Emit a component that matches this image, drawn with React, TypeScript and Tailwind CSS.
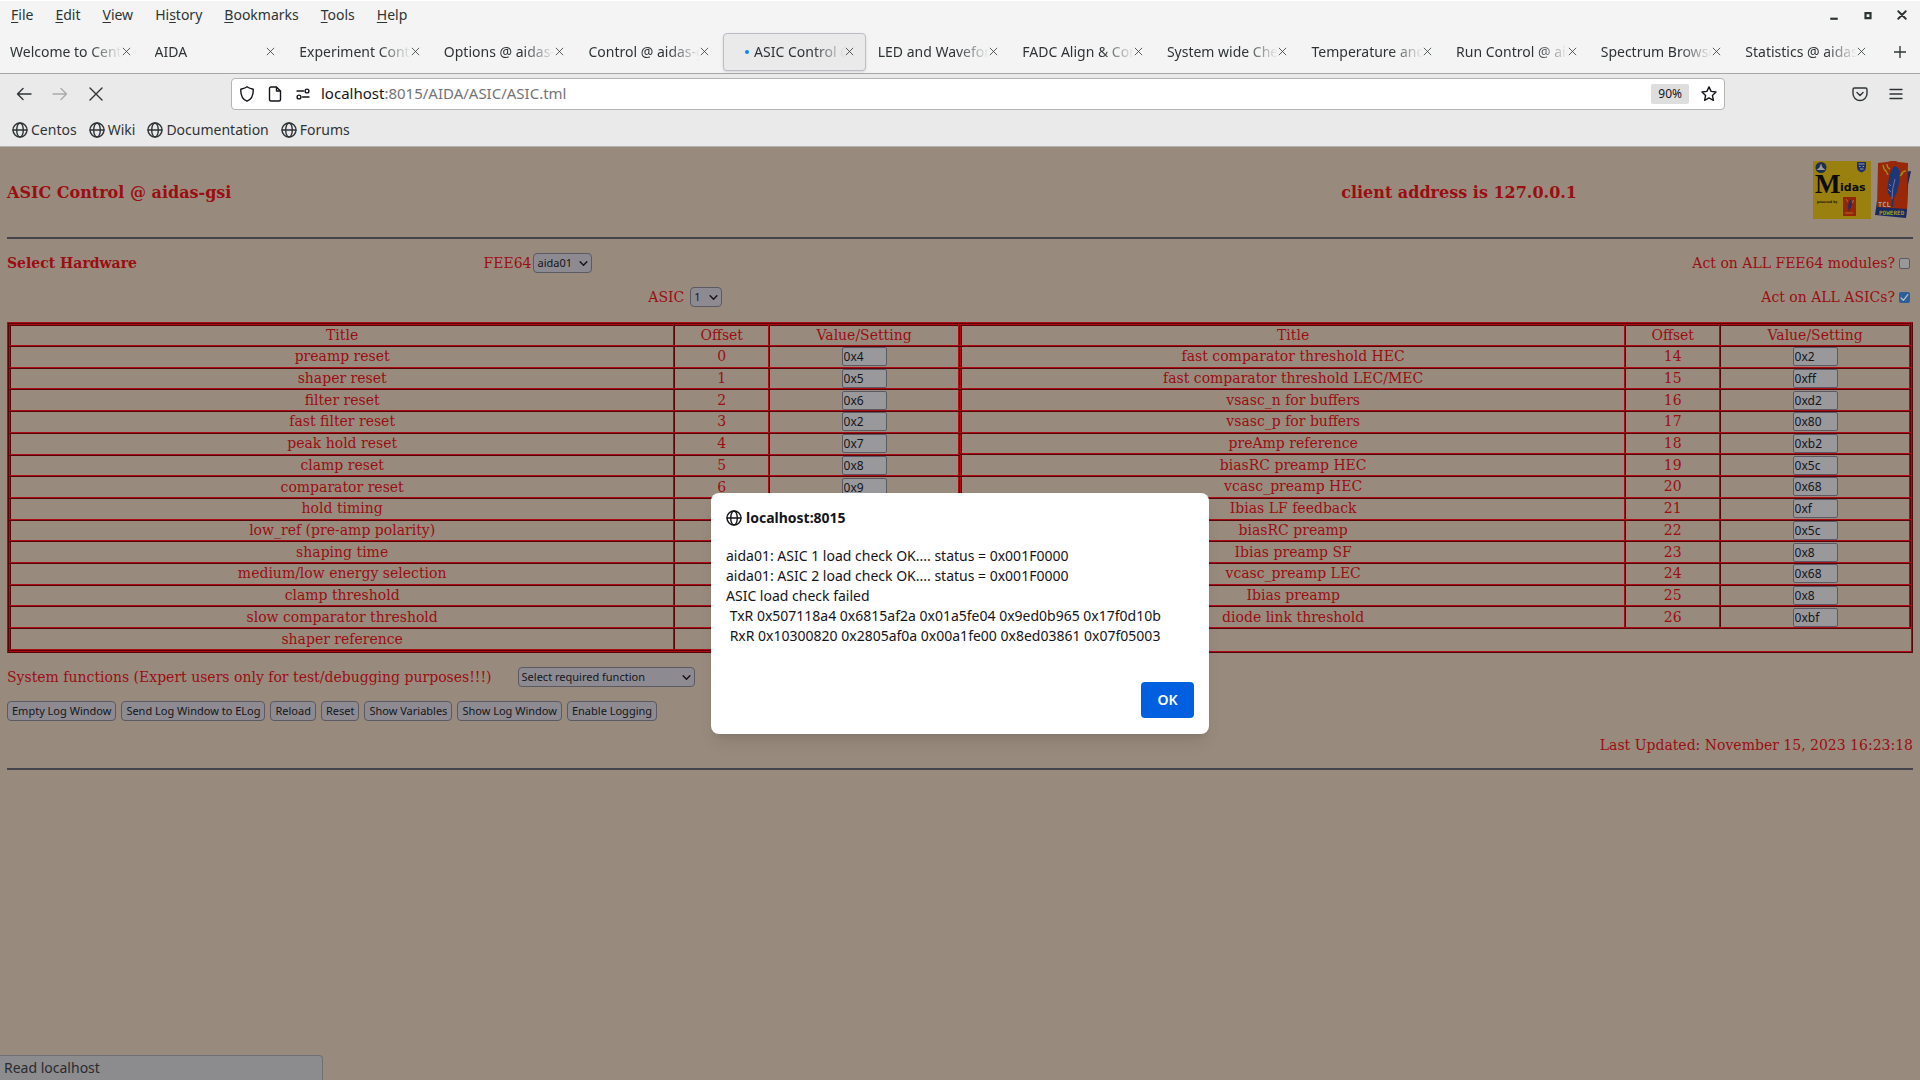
import type { ReactNode } from 'react'

const menus = [
  ['', 'F', 'ile'],
  ['', 'E', 'dit'],
  ['', 'V', 'iew'],
  ['Hi', 's', 'tory'],
  ['', 'B', 'ookmarks'],
  ['', 'T', 'ools'],
  ['', 'H', 'elp'],
]

const tabs = [
  'Welcome to CentOS',
  'AIDA',
  'Experiment Control',
  'Options @ aidas-gsi',
  'Control @ aidas-gsi',
  'ASIC Control @ aidas',
  'LED and Waveform',
  'FADC Align & Control',
  'System wide Checks',
  'Temperature and status',
  'Run Control @ aidas',
  'Spectrum Browser',
  'Statistics @ aidas-gsi',
]
const activeTab = 5

const bookmarks = ['Centos', 'Wiki', 'Documentation', 'Forums']

type Register = { title: string; value: string }

const leftRegisters: Register[] = [
  { title: 'preamp reset', value: '0x4' },
  { title: 'shaper reset', value: '0x5' },
  { title: 'filter reset', value: '0x6' },
  { title: 'fast filter reset', value: '0x2' },
  { title: 'peak hold reset', value: '0x7' },
  { title: 'clamp reset', value: '0x8' },
  { title: 'comparator reset', value: '0x9' },
  { title: 'hold timing', value: '' },
  { title: 'low_ref (pre-amp polarity)', value: '' },
  { title: 'shaping time', value: '' },
  { title: 'medium/low energy selection', value: '' },
  { title: 'clamp threshold', value: '' },
  { title: 'slow comparator threshold', value: '' },
  { title: 'shaper reference', value: '' },
]

const rightRegisters: Register[] = [
  { title: 'fast comparator threshold HEC', value: '0x2' },
  { title: 'fast comparator threshold LEC/MEC', value: '0xff' },
  { title: 'vsasc_n for buffers', value: '0xd2' },
  { title: 'vsasc_p for buffers', value: '0x80' },
  { title: 'preAmp reference', value: '0xb2' },
  { title: 'biasRC preamp HEC', value: '0x5c' },
  { title: 'vcasc_preamp HEC', value: '0x68' },
  { title: 'Ibias LF feedback', value: '0xf' },
  { title: 'biasRC preamp', value: '0x5c' },
  { title: 'Ibias preamp SF', value: '0x8' },
  { title: 'vcasc_preamp LEC', value: '0x68' },
  { title: 'Ibias preamp', value: '0x8' },
  { title: 'diode link threshold', value: '0xbf' },
]

const actions = [
  'Empty Log Window',
  'Send Log Window to ELog',
  'Reload',
  'Reset',
  'Show Variables',
  'Show Log Window',
  'Enable Logging',
]

const message = `aida01: ASIC 1 load check OK.... status = 0x001F0000
aida01: ASIC 2 load check OK.... status = 0x001F0000
ASIC load check failed
 TxR 0x507118a4 0x6815af2a 0x01a5fe04 0x9ed0b965 0x17f0d10b
 RxR 0x10300820 0x2805af0a 0x00a1fe00 0x8ed03861 0x07f05003`

function Icon({ className = 'size-4', children }: { className?: string; children: ReactNode }) {
  return (
    <svg
      viewBox="0 0 16 16"
      className={`shrink-0 ${className}`}
      fill="none"
      stroke="currentColor"
      strokeWidth="1.4"
      strokeLinecap="round"
      strokeLinejoin="round"
      aria-hidden="true"
    >
      {children}
    </svg>
  )
}

function Globe() {
  return (
    <Icon>
      <circle cx="8" cy="8" r="7" />
      <ellipse cx="8" cy="8" rx="3.3" ry="7" />
      <path d="M1 8h14" />
    </Icon>
  )
}

function Cross({ className }: { className?: string }) {
  return (
    <Icon className={className}>
      <path d="M2 2l12 12M14 2L2 14" />
    </Icon>
  )
}

function MidasLogo() {
  return (
    <svg viewBox="0 0 58 58" className="size-[58px]" aria-label="Midas">
      <rect width="58" height="58" fill="#99800f" />
      <circle cx="8" cy="6.5" r="5.5" fill="#1c2f4c" />
      <path d="M3.5 9l3-2.5L8 2.5l1.5 4 3 2.5z" fill="#9a9c98" />
      <path d="M44 1h9v5q0 4-4.500 5.500Q44 10 44 6z" fill="#1c2f6c" />
      <path d="M45.500 3h6M46 5.500h1.500M49.500 5.500h1.500M47 8h3.500" stroke="#9a9c98" strokeWidth="1" />
      <text x="2" y="32" fontFamily="Liberation Serif, serif" fontWeight="700" fontSize="27" fill="#0c0c0a">M</text>
      <text x="27" y="30" fontFamily="DejaVu Sans, sans-serif" fontWeight="700" fontSize="11" fill="#0c0c0a">idas</text>
      <text x="4" y="42" fontFamily="DejaVu Serif, serif" fontWeight="700" fontSize="3.2" fill="#0c0c0a">powered by</text>
      <rect x="30" y="36" width="13" height="19" fill="#982408" />
      <path d="M37 38q3 3 1 8l-2 5q-2-6 1-13z" fill="#1c2f6c" />
      <path d="M33 38l2 3M40.5 39l-1 3M32 52h8" stroke="#a58d30" strokeWidth=".8" />
    </svg>
  )
}

function TclLogo() {
  return (
    <svg viewBox="0 0 36 58" className="h-[58px] w-9" aria-label="Tcl powered">
      <path d="M30 11l6-1-3 14-1 26-1 7-31-3 2-14 5-3z" fill="#17295f" />
      <path d="M3 2l9-1 4-1h5l2 1 10 1-1 46-30-2z" fill="#982808" />
      <path d="M19 5q6 1 6 8l-1 9-2 9-3 6-1 9h-2l1-9q-6-4-4-13 1-13 6-19z" fill="#1c3777" />
      <path d="M20 18q-3 9-3 20M14 23l2 2M13 28l3 3" stroke="#7b7ea0" strokeWidth=".9" fill="none" />
      <path d="M8 4q1 5 3 6l2 4M12 3q0 4 3 5M31 10q-4 0-5 4M28 12l-3 3" stroke="#a08a16" strokeWidth="1.4" fill="none" />
      <text x="3" y="46" fontFamily="DejaVu Sans Mono, monospace" fontSize="7" fill="#a5a09a">TCL</text>
      <text x="4" y="54" fontFamily="DejaVu Sans Mono, monospace" fontWeight="700" fontSize="6" fill="#9c9b22">POWERED</text>
    </svg>
  )
}

function Select({ id, value, className }: { id: string; value: string; className: string }) {
  return (
    <span className="relative inline-flex font-['Noto_Sans',sans-serif]">
      <select
        id={id}
        className={`h-5 appearance-none rounded-sm border border-[#5b5964] bg-[#8d8b91] pl-[3px] text-[11px] leading-4 text-[#151519] ${className}`}
      >
        <option>{value}</option>
      </select>
      <Icon className="pointer-events-none absolute top-[6px] right-1 size-[9px] text-[#151519]">
        <path d="M2 5l6 6 6-6" strokeWidth="2.6" />
      </Icon>
    </span>
  )
}

function RegisterTable({ rows, first, className }: { rows: Register[]; first: number; className: string }) {
  const cell = 'border-2 border-[#ac0b14] p-0 [border-style:ridge]'
  return (
    <table className={`w-full table-fixed border-collapse text-center leading-[17px] ${className}`}>
      <thead>
        <tr className="h-[21px]">
          <th className={`w-7/10 font-normal ${cell}`}>Title</th>
          <th className={`w-1/10 font-normal ${cell}`}>Offset</th>
          <th className={`w-1/5 font-normal ${cell}`}>Value/Setting</th>
        </tr>
      </thead>
      <tbody>
        {rows.map((row, i) => (
          <tr key={row.title}>
            <td className={cell}>{row.title}</td>
            <td className={cell}>{first + i}</td>
            <td className={cell}>
              <input
                type="text"
                aria-label={row.title}
                defaultValue={row.value}
                className="mx-auto block h-[19px] w-[45px] rounded-xs border border-[#5b5964] bg-[#99989b] px-px font-['Noto_Sans',sans-serif] text-xs text-[#151519]"
              />
            </td>
          </tr>
        ))}
      </tbody>
    </table>
  )
}

function BrowserChrome() {
  return (
    <header className="bg-[#f4f4f4] text-sm text-[#2e3436]">
      <div className="flex h-7 items-center justify-between border-t border-white pr-[13px] pl-[11px]">
        <nav className="flex gap-[22px]">
          {menus.map(([before, key, after]) => (
            <button key={before + key + after} type="button">
              {before}
              <span className="underline underline-offset-2">{key}</span>
              {after}
            </button>
          ))}
        </nav>
        <div className="flex items-center gap-6">
          <button type="button" aria-label="Minimize">
            <Icon className="size-[10px]"><path d="M2 14h12" strokeWidth="3.5" strokeLinecap="butt" /></Icon>
          </button>
          <button type="button" aria-label="Maximize">
            <Icon className="size-[10px]"><path d="M4 5h8v8H4z" strokeWidth="3.5" strokeLinejoin="miter" /></Icon>
          </button>
          <button type="button" aria-label="Close window">
            <Icon className="size-[10px]"><path d="M2 2l12 12M14 2L2 14" strokeWidth="3" /></Icon>
          </button>
        </div>
      </div>

      <div className="flex h-[46px] items-center border-b border-[#a6a6a6] pt-0.5">
        <div className="flex min-w-0 flex-1">
          {tabs.map((tab, i) => (
            <div
              key={tab}
              className={`mr-0.5 flex h-[38px] min-w-0 flex-1 items-center rounded border pr-[11px] pl-[9px] ${
                i === activeTab ? 'border-[#bdbdc6] bg-[#eaeaea] shadow-sm' : 'border-transparent'
              }`}
            >
              {i === activeTab && <span className="mr-[5px] ml-3 size-1 shrink-0 rounded-full bg-[#0a84ff]" />}
              <a
                href="#"
                className="min-w-0 flex-1 overflow-hidden whitespace-nowrap [mask-image:linear-gradient(to_left,transparent,black_32px)]"
              >
                {tab}
              </a>
              <button type="button" aria-label={`Close ${tab}`}>
                <Cross className="size-[9px]" />
              </button>
            </div>
          ))}
        </div>
        <button type="button" aria-label="New tab" className="mr-3.5 ml-3.5">
          <Icon className="size-3"><path d="M8 0v16M0 8h16" strokeWidth="1.8" /></Icon>
        </button>
      </div>

      <div className="flex h-10 items-center bg-[#eaeaea]">
        <div className="flex w-[231px] shrink-0 items-center gap-5 pl-4">
          <button type="button" aria-label="Back"><Icon><path d="M15 8H1.500M7 2.500L1.500 8 7 13.500" /></Icon></button>
          <button type="button" aria-label="Forward" className="text-[#a9abac]"><Icon><path d="M1 8h13.500M9 2.500L14.500 8 9 13.500" /></Icon></button>
          <button type="button" aria-label="Stop"><Cross /></button>
        </div>
        <div className="flex h-8 flex-1 items-center rounded border border-[#b4b4b4] bg-white pr-[7px] pl-[7px] text-[#15141a]">
          <Icon><path d="M8 .8C6 2.500 3.500 2.800 1.800 3.200 1.500 9 4 13.500 8 15.200c4-1.700 6.500-6.200 6.200-12C12.500 2.800 10 2.500 8 .8z" /></Icon>
          <Icon className="ml-3 size-4"><path d="M2.500 2.500q0-1.500 1.500-1.500h5.500l4 4v8.500q0 1.500-1.500 1.500H4q-1.500 0-1.500-1.500zM9.500 1v4h4" /></Icon>
          <Icon className="ml-3 size-4">
            <circle cx="12" cy="5" r="1.9" />
            <circle cx="4" cy="11" r="1.9" />
            <path d="M2 5h6.500M7.500 11H14" />
          </Icon>
          <div role="textbox" aria-label="Address" className="ml-2.5 flex-1 text-[15px] text-[#747478]">
            <span className="text-[#15141a]">localhost</span>:8015/AIDA/ASIC/ASIC.tml
          </div>
          <button type="button" className="mr-3 h-5 rounded-xs bg-[#dedede] px-[7px] text-xs">90%</button>
          <button type="button" aria-label="Bookmark this page">
            <Icon><path d="M8 .9l2.100 4.500 4.900.6-3.600 3.400 1 4.900L8 11.900l-4.400 2.400 1-4.900L1 6l4.900-.6z" /></Icon>
          </button>
        </div>
        <div className="flex w-[195px] shrink-0 items-center justify-end gap-5 pr-4">
          <button type="button" aria-label="Save to Pocket">
            <Icon><path d="M2.500 2h11q1.500 0 1.500 1.500V7.500a7 7 0 0 1-14 0V3.500Q1 2 2.500 2zM5 6.500l3 3 3-3" /></Icon>
          </button>
          <button type="button" aria-label="Open application menu">
            <Icon><path d="M2 3.500h12M2 8h12M2 12.500h12" /></Icon>
          </button>
        </div>
      </div>

      <div className="flex h-[33px] items-center gap-3 border-b border-[#b0b3ae] bg-[#eaeaea] px-3">
        {bookmarks.map((name) => (
          <a key={name} href="#" className="flex items-center gap-[3px]">
            <Globe />
            {name}
          </a>
        ))}
      </div>
    </header>
  )
}

function AlertDialog() {
  return (
    <div
      role="alertdialog"
      aria-labelledby="alert-title"
      aria-describedby="alert-text"
      className="absolute top-[493px] left-1/2 w-[498px] -translate-x-1/2 rounded-lg bg-white px-[15px] pt-[17px] pb-4 text-sm text-[#15141a] shadow-lg"
    >
      <h2 id="alert-title" className="flex h-4 items-center gap-1 font-bold">
        <Globe />
        localhost:8015
      </h2>
      <p id="alert-text" className="mt-5 leading-5 whitespace-pre">{message}</p>
      <div className="mt-9 flex justify-end">
        <button type="button" className="h-9 w-[53px] rounded bg-[#0060df] font-semibold text-white">OK</button>
      </div>
    </div>
  )
}

export default function App() {
  return (
    <div className="relative flex min-h-screen flex-col bg-[#988b7d] font-['Noto_Sans',sans-serif]">
      <BrowserChrome />

      <main className="flex-1 px-[7px] font-['DejaVu_Serif',serif] text-sm text-[#9c0d12]">
        <div className="flex h-[90px] items-center pt-0.5 text-base font-bold">
          <h1 className="w-7/10">ASIC Control @ aidas-gsi</h1>
          <p className="flex-1">client address is 127.0.0.1</p>
          <div className="flex gap-1 pr-0.5 pb-1.5">
            <MidasLogo />
            <TclLogo />
          </div>
        </div>
        <hr className="border-t-2 border-[#43434b]" />

        <div className="mt-[14px] flex h-5 items-center">
          <h2 className="w-1/4 font-bold">Select Hardware</h2>
          <div className="flex flex-1 items-center gap-0.5">
            <label htmlFor="fee64">FEE64</label>
            <Select id="fee64" value="aida01" className="w-[59px]" />
          </div>
          <label className="flex items-center gap-1">
            Act on ALL FEE64 modules?
            <input type="checkbox" className="mr-[3px] size-[11px] appearance-none rounded-xs border border-[#5b5964] bg-[#99989b]" />
          </label>
        </div>
        <div className="mt-[14px] flex h-5 items-center">
          <div className="w-1/3" />
          <div className="flex flex-1 items-center gap-1.5 pl-1.5">
            <label htmlFor="asic">ASIC</label>
            <Select id="asic" value="1" className="w-8" />
          </div>
          <label className="relative flex items-center gap-1">
            Act on ALL ASICs?
            <input type="checkbox" defaultChecked className="mr-[3px] size-[11px] appearance-none rounded-xs bg-[#2b5f9c]" />
            <Icon className="pointer-events-none absolute right-1 size-[9px] text-[#b8bcc4]">
              <path d="M2 9l4 4 8-10" strokeWidth="2.4" />
            </Icon>
          </label>
        </div>

        <div className="mt-[15px] flex items-start border-2 border-[#ac0b14] [border-style:ridge]">
          <RegisterTable rows={leftRegisters} first={0} className="h-[327px]" />
          <RegisterTable rows={rightRegisters} first={14} className="h-[305px]" />
        </div>

        <div className="mt-[14px] flex items-center gap-[26px]">
          <label htmlFor="function">System functions (Expert users only for test/debugging purposes!!!)</label>
          <Select id="function" value="Select required function" className="w-[177px]" />
        </div>
        <div className="mt-[14px] flex gap-[5px] font-['Noto_Sans',sans-serif]">
          {actions.map((action) => (
            <button
              key={action}
              type="button"
              className="h-5 rounded-sm border border-[#5b5964] bg-[#8d8b91] px-1 text-[11px] leading-4 text-[#151519]"
            >
              {action}
            </button>
          ))}
        </div>
        <p className="mt-[14px] text-right">Last Updated: November 15, 2023 16:23:18</p>
        <hr className="mt-[13px] border-t-2 border-[#43434b]" />
      </main>

      <footer className="h-[25px] w-[323px] rounded-tr border-t border-r border-[#707074] bg-[#8c8b8d] pl-1 text-sm leading-6 text-[#2a2b2e]">
        Read localhost
      </footer>

      <AlertDialog />
    </div>
  )
}
